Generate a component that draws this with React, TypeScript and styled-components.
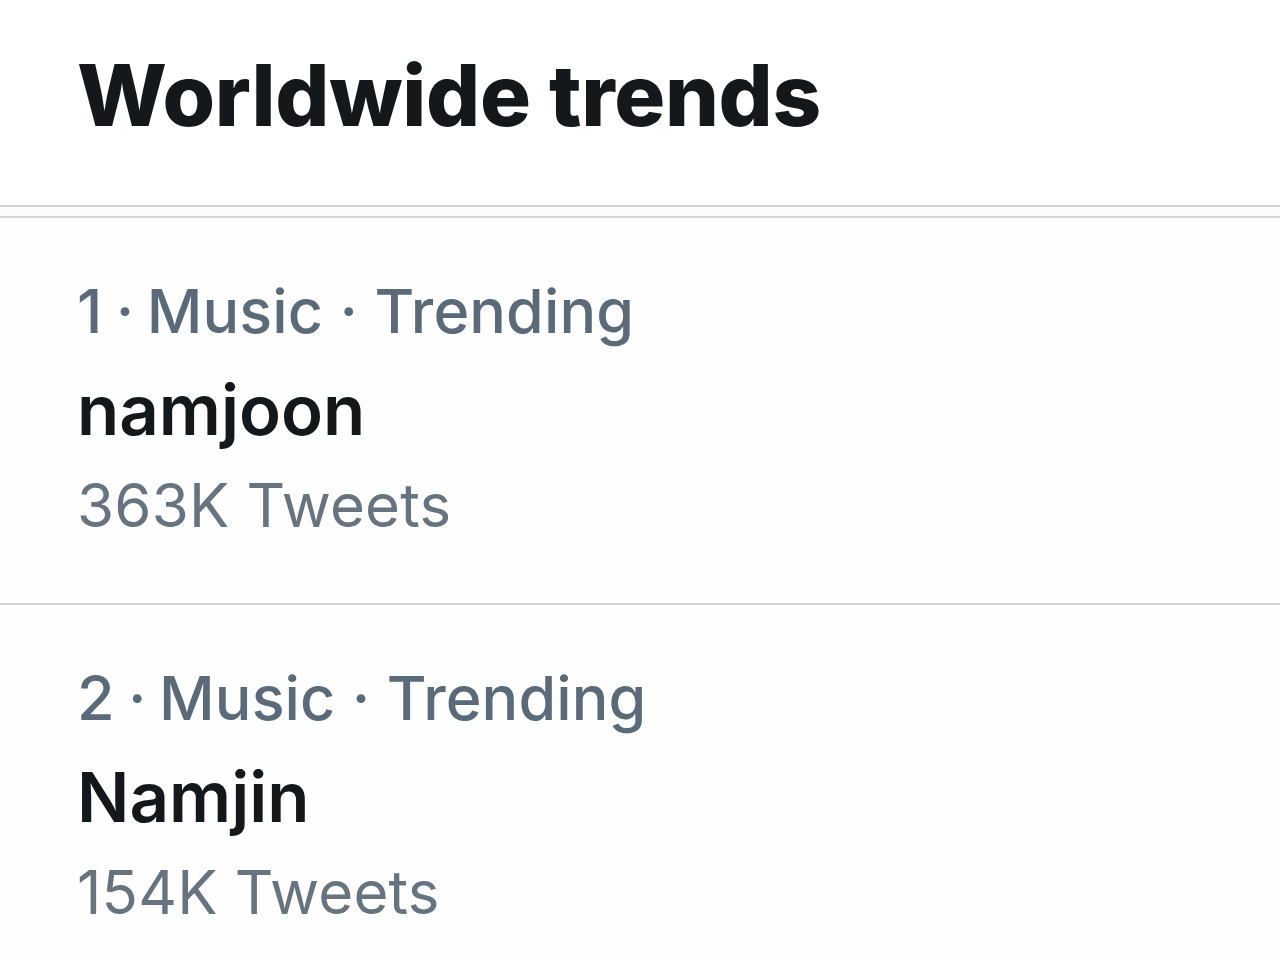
import React from "react";
import styled, { createGlobalStyle } from "styled-components";

const Global = createGlobalStyle`
  html, body { margin: 0; padding: 0; background: #ffffff; }
  body { font-family: Inter, "Noto Sans", "Liberation Sans", sans-serif; -webkit-font-smoothing: antialiased; }
`;

const Page = styled.div`
  width: 1280px;
  height: 960px;
  overflow: hidden;
  background: #ffffff;
`;

const Header = styled.header`
  padding: 46px 0 59px 77px;
  border-bottom: 2px solid #d3d3d3;
`;

const Title = styled.h1`
  margin: 0;
  font-size: 85px;
  line-height: 100px;
  font-weight: 800;
  letter-spacing: -0.3px;
  color: #15181b;
`;

const Spacer = styled.div`
  height: 9px;
  background: #fcfcfc;
  border-bottom: 2px solid #d3d3d3;
`;

const Row = styled.div`
  display: flex;
  flex-direction: column;
  padding: 58px 0 63px 77px;
  border-bottom: 2px solid #d3d3d3;
  background: #fefefe;
`;

const Meta = styled.div`
  font-size: 61px;
  line-height: 70px;
  font-weight: 500;
  color: #5b6a78;
  letter-spacing: 0.1px;
`;

const Rank = styled.span`
  margin-right: -3px;
`;

const FirstDot = styled.span`
  margin-right: -4px;
`;

const Name = styled.div`
  margin-top: 24px;
  font-size: 69px;
  line-height: 80px;
  font-weight: 600;
  color: #15181b;
`;

const Count = styled.div`
  margin-top: 20px;
  font-size: 60px;
  line-height: 70px;
  font-weight: 400;
  color: #67747f;
  letter-spacing: 0.2px;
`;

const trends = [
  { rank: 1, cat: "Music", name: "namjoon", count: "363K" },
  { rank: 2, cat: "Music", name: "Namjin", count: "154K" },
];

export default function App() {
  return (
    <Page>
      <Global />
      <Header>
        <Title>Worldwide trends</Title>
      </Header>
      <Spacer />
      {trends.map((t) => (
        <Row key={t.rank}>
          <Meta>
            <Rank>{t.rank}</Rank> <FirstDot>·</FirstDot> {t.cat} · Trending
          </Meta>
          <Name>{t.name}</Name>
          <Count>{t.count} Tweets</Count>
        </Row>
      ))}
    </Page>
  );
}
